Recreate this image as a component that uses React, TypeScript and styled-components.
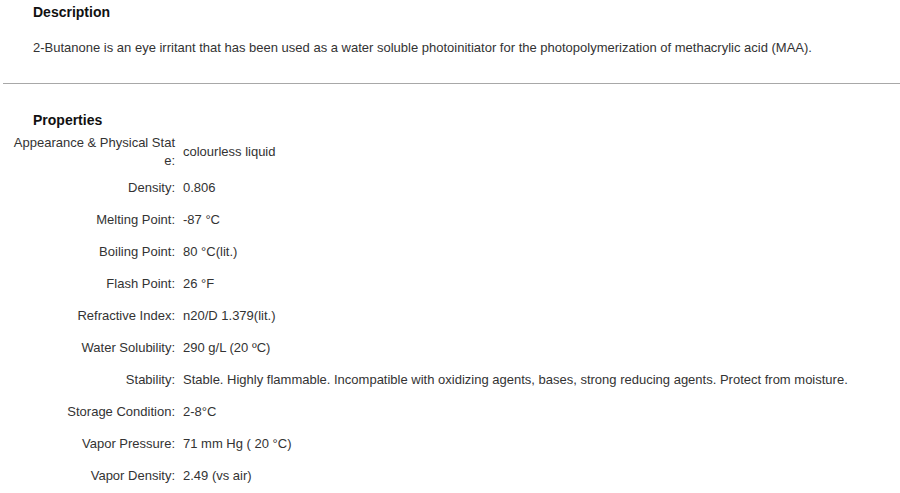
import React from "react";
import styled, { createGlobalStyle } from "styled-components";

const GlobalStyle = createGlobalStyle`
  body {
    margin: 0;
    background: #ffffff;
    font-family: Arial, "Liberation Sans", sans-serif;
    color: #333333;
    font-size: 13px;
  }
`;

const Page = styled.div`
  width: 900px;
`;

const Section = styled.section<{ top: number }>`
  padding-top: ${(props) => props.top}px;
`;

const Heading = styled.h3`
  margin: 0;
  padding-left: 33px;
  font-size: 14px;
  font-weight: bold;
  line-height: 20px;
  color: #111111;
`;

const Paragraph = styled.p`
  margin: 17px 0 0;
  padding-left: 33px;
  line-height: 18px;
  font-size: 13px;
`;

const Divider = styled.hr`
  margin: 26px 0 0 3px;
  border: 0;
  border-top: 1px solid #a8a8a8;
  height: 0;
`;

const PropTable = styled.div`
  margin-top: 2px;
  display: grid;
  grid-template-columns: 165px 1fr;
  column-gap: 8px;
  padding-left: 10px;
`;

const Row = styled.div`
  display: contents;
`;

const Label = styled.div`
  display: flex;
  align-items: center;
  justify-content: flex-end;
  text-align: right;
  min-height: 32px;
  padding: 2px 0;
  box-sizing: border-box;
  line-height: 18px;
  word-break: break-all;
`;

const Value = styled.div`
  display: flex;
  align-items: center;
  min-height: 32px;
  padding: 2px 0;
  box-sizing: border-box;
  line-height: 18px;
`;

const properties: [string, string][] = [
  ["Appearance & Physical State:", "colourless liquid"],
  ["Density:", "0.806"],
  ["Melting Point:", "-87 °C"],
  ["Boiling Point:", "80 °C(lit.)"],
  ["Flash Point:", "26 °F"],
  ["Refractive Index:", "n20/D 1.379(lit.)"],
  ["Water Solubility:", "290 g/L (20 ºC)"],
  [
    "Stability:",
    "Stable. Highly flammable. Incompatible with oxidizing agents, bases, strong reducing agents. Protect from moisture.",
  ],
  ["Storage Condition:", "2-8°C"],
  ["Vapor Pressure:", "71 mm Hg ( 20 °C)"],
  ["Vapor Density:", "2.49 (vs air)"],
];

export default function App() {
  return (
    <Page>
      <GlobalStyle />
      <Section top={2}>
        <Heading>Description</Heading>
        <Paragraph>
          2-Butanone is an eye irritant that has been used as a water soluble
          photoinitiator for the photopolymerization of methacrylic acid (MAA).
        </Paragraph>
      </Section>
      <Divider />
      <Section top={26}>
        <Heading>Properties</Heading>
        <PropTable>
          {properties.map(([label, value]) => (
            <Row key={label}>
              <Label>{label}</Label>
              <Value>{value}</Value>
            </Row>
          ))}
        </PropTable>
      </Section>
    </Page>
  );
}
